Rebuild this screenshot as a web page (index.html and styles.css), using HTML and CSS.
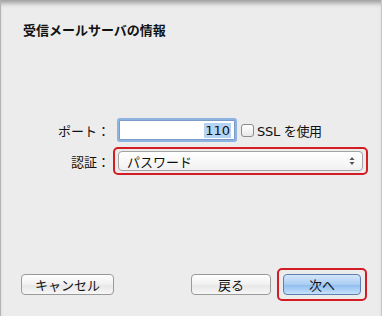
FILE: index.html
```html
<!DOCTYPE html>
<html lang="ja">
<head>
    <meta charset="UTF-8">
    <meta name="viewport" content="width=device-width, initial-scale=1.0">
    <title>受信メールサーバの情報</title>
    <link rel="stylesheet" href="styles.css">
</head>
<body>
    <div class="sheet">
        <h1 class="title">受信メールサーバの情報</h1>

        <div class="form">
            <div class="row">
                <span class="label">ポート：</span>
                <div class="port-field"><span class="selected">110</span></div>
                <span class="checkbox"></span>
                <span class="check-text">SSL を使用</span>
            </div>
            <div class="row">
                <span class="label">認証：</span>
                <div class="mark mark-select">
                    <div class="select">
                        <span>パスワード</span>
                        <svg class="arrows" width="6" height="10" viewBox="0 0 6 10">
                            <path d="M3 1 L5.5 4 L0.5 4 Z" fill="#555"/>
                            <path d="M3 9 L5.5 6 L0.5 6 Z" fill="#555"/>
                        </svg>
                    </div>
                </div>
            </div>
        </div>

        <div class="buttons">
            <button class="btn btn-cancel">キャンセル</button>
            <div class="spacer"></div>
            <button class="btn btn-back">戻る</button>
            <div class="mark mark-next">
                <button class="btn btn-primary">次へ</button>
            </div>
        </div>
    </div>
</body>
</html>
```

FILE: styles.css
```css
body { margin: 0; font-family: "DejaVu Sans", "Noto Sans CJK JP", sans-serif; color: #111; background: #ececec; }
.sheet { width: 380px; height: 316px; display: flex; flex-direction: column; background: #ececec; border-left: 1px solid #b4b4b4; border-right: 1px solid #c8c8c8; box-shadow: inset 0 6px 5px -3px rgba(0,0,0,0.35); }
.title { margin: 0; padding: 22px 0 0 22px; font-size: 13px; line-height: 16px; font-weight: bold; font-family: "Noto Sans CJK JP", sans-serif; }

.form { margin-top: 82px; display: flex; flex-direction: column; gap: 7px; }
.row { display: flex; align-items: center; }
.label { width: 109px; flex: none; text-align: right; font-size: 13px; font-family: "Noto Sans CJK JP", sans-serif; margin-right: 3px; }
.port-field { width: 111px; height: 18px; margin-left: 6px; background: #fff; border: 1px solid #7d9cc7; border-radius: 1px; box-shadow: 0 0 0 2px rgba(110,160,220,0.75); display: flex; justify-content: flex-end; align-items: center; padding-right: 3px; font-size: 13px; }
.selected { background: #b5d3f5; line-height: 15px; padding: 0 1px; }
.checkbox { width: 11px; height: 11px; margin-left: 6px; border: 1px solid #8c8c8c; border-radius: 3px; background: linear-gradient(#ffffff, #e8e8e8); }
.check-text { margin-left: 3px; font-size: 13px; letter-spacing: -0.3px; }

.mark { border: 2px solid #d31d25; border-radius: 5px; padding: 2px 3px; }
.mark-select { width: 245px; }
.select { height: 18px; border: 1px solid #a3a3a3; border-radius: 4px; background: linear-gradient(#ffffff, #f1f1f1); display: flex; align-items: center; justify-content: space-between; padding: 0 7px 0 8px; font-size: 13px; font-family: "Noto Sans CJK JP", sans-serif; }
.arrows { display: block; }

.buttons { margin-top: auto; padding: 0 14px 15px 20px; display: flex; align-items: center; }
.spacer { flex: 1; }
.btn { height: 21px; padding: 0; border: 1px solid #9a9a9a; border-radius: 4px; background: linear-gradient(#ffffff, #f0f0f0 50%, #e6e6e6 51%, #f6f6f6); font-family: "Noto Sans CJK JP", sans-serif; font-size: 13px; color: #111; line-height: 19px; }
.btn-cancel { width: 93px; }
.btn-back { width: 80px; margin-right: 6px; }
.mark-next { padding: 4px 4px; }
.btn-primary { width: 78px; border-color: #5c7fae; background: linear-gradient(#d4e6fa, #a9cdf3 50%, #8dbcef 51%, #c6e1fb); }
```
